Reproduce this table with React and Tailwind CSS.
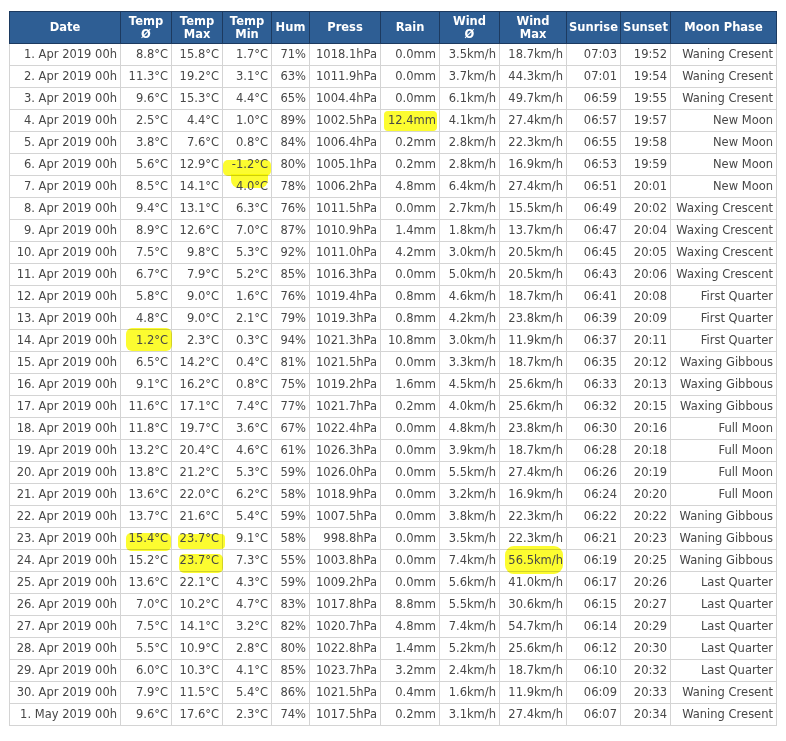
const rows = [
  ["1. Apr 2019 00h", "8.8", "15.8", "1.7", "71", "1018.1", "0.0", "3.5", "18.7", "07:03", "19:52", "Waning Cresent"],
  ["2. Apr 2019 00h", "11.3", "19.2", "3.1", "63", "1011.9", "0.0", "3.7", "44.3", "07:01", "19:54", "Waning Cresent"],
  ["3. Apr 2019 00h", "9.6", "15.3", "4.4", "65", "1004.4", "0.0", "6.1", "49.7", "06:59", "19:55", "Waning Cresent"],
  ["4. Apr 2019 00h", "2.5", "4.4", "1.0", "89", "1002.5", "12.4", "4.1", "27.4", "06:57", "19:57", "New Moon"],
  ["5. Apr 2019 00h", "3.8", "7.6", "0.8", "84", "1006.4", "0.2", "2.8", "22.3", "06:55", "19:58", "New Moon"],
  ["6. Apr 2019 00h", "5.6", "12.9", "-1.2", "80", "1005.1", "0.2", "2.8", "16.9", "06:53", "19:59", "New Moon"],
  ["7. Apr 2019 00h", "8.5", "14.1", "4.0", "78", "1006.2", "4.8", "6.4", "27.4", "06:51", "20:01", "New Moon"],
  ["8. Apr 2019 00h", "9.4", "13.1", "6.3", "76", "1011.5", "0.0", "2.7", "15.5", "06:49", "20:02", "Waxing Crescent"],
  ["9. Apr 2019 00h", "8.9", "12.6", "7.0", "87", "1010.9", "1.4", "1.8", "13.7", "06:47", "20:04", "Waxing Crescent"],
  ["10. Apr 2019 00h", "7.5", "9.8", "5.3", "92", "1011.0", "4.2", "3.0", "20.5", "06:45", "20:05", "Waxing Crescent"],
  ["11. Apr 2019 00h", "6.7", "7.9", "5.2", "85", "1016.3", "0.0", "5.0", "20.5", "06:43", "20:06", "Waxing Crescent"],
  ["12. Apr 2019 00h", "5.8", "9.0", "1.6", "76", "1019.4", "0.8", "4.6", "18.7", "06:41", "20:08", "First Quarter"],
  ["13. Apr 2019 00h", "4.8", "9.0", "2.1", "79", "1019.3", "0.8", "4.2", "23.8", "06:39", "20:09", "First Quarter"],
  ["14. Apr 2019 00h", "1.2", "2.3", "0.3", "94", "1021.3", "10.8", "3.0", "11.9", "06:37", "20:11", "First Quarter"],
  ["15. Apr 2019 00h", "6.5", "14.2", "0.4", "81", "1021.5", "0.0", "3.3", "18.7", "06:35", "20:12", "Waxing Gibbous"],
  ["16. Apr 2019 00h", "9.1", "16.2", "0.8", "75", "1019.2", "1.6", "4.5", "25.6", "06:33", "20:13", "Waxing Gibbous"],
  ["17. Apr 2019 00h", "11.6", "17.1", "7.4", "77", "1021.7", "0.2", "4.0", "25.6", "06:32", "20:15", "Waxing Gibbous"],
  ["18. Apr 2019 00h", "11.8", "19.7", "3.6", "67", "1022.4", "0.0", "4.8", "23.8", "06:30", "20:16", "Full Moon"],
  ["19. Apr 2019 00h", "13.2", "20.4", "4.6", "61", "1026.3", "0.0", "3.9", "18.7", "06:28", "20:18", "Full Moon"],
  ["20. Apr 2019 00h", "13.8", "21.2", "5.3", "59", "1026.0", "0.0", "5.5", "27.4", "06:26", "20:19", "Full Moon"],
  ["21. Apr 2019 00h", "13.6", "22.0", "6.2", "58", "1018.9", "0.0", "3.2", "16.9", "06:24", "20:20", "Full Moon"],
  ["22. Apr 2019 00h", "13.7", "21.6", "5.4", "59", "1007.5", "0.0", "3.8", "22.3", "06:22", "20:22", "Waning Gibbous"],
  ["23. Apr 2019 00h", "15.4", "23.7", "9.1", "58", "998.8", "0.0", "3.5", "22.3", "06:21", "20:23", "Waning Gibbous"],
  ["24. Apr 2019 00h", "15.2", "23.7", "7.3", "55", "1003.8", "0.0", "7.4", "56.5", "06:19", "20:25", "Waning Gibbous"],
  ["25. Apr 2019 00h", "13.6", "22.1", "4.3", "59", "1009.2", "0.0", "5.6", "41.0", "06:17", "20:26", "Last Quarter"],
  ["26. Apr 2019 00h", "7.0", "10.2", "4.7", "83", "1017.8", "8.8", "5.5", "30.6", "06:15", "20:27", "Last Quarter"],
  ["27. Apr 2019 00h", "7.5", "14.1", "3.2", "82", "1020.7", "4.8", "7.4", "54.7", "06:14", "20:29", "Last Quarter"],
  ["28. Apr 2019 00h", "5.5", "10.9", "2.8", "80", "1022.8", "1.4", "5.2", "25.6", "06:12", "20:30", "Last Quarter"],
  ["29. Apr 2019 00h", "6.0", "10.3", "4.1", "85", "1023.7", "3.2", "2.4", "18.7", "06:10", "20:32", "Last Quarter"],
  ["30. Apr 2019 00h", "7.9", "11.5", "5.4", "86", "1021.5", "0.4", "1.6", "11.9", "06:09", "20:33", "Waning Cresent"],
  ["1. May 2019 00h", "9.6", "17.6", "2.3", "74", "1017.5", "0.2", "3.1", "27.4", "06:07", "20:34", "Waning Cresent"],
];

const units = ["", "°C", "°C", "°C", "%", "hPa", "mm", "km/h", "km/h", "", "", ""];

const headers = [
  ["Date"],
  ["Temp", "Ø"],
  ["Temp", "Max"],
  ["Temp", "Min"],
  ["Hum"],
  ["Press"],
  ["Rain"],
  ["Wind", "Ø"],
  ["Wind", "Max"],
  ["Sunrise"],
  ["Sunset"],
  ["Moon Phase"],
];

const widths = ["w-[111px]", "w-[51px]", "w-[51px]", "w-[49px]", "w-[38px]", "w-[71px]", "w-[59px]", "w-[60px]", "w-[67px]", "w-[54px]", "w-[50px]", "w-[106px]"];

// highlighter strokes, positioned inside the cell
const marks = {
  "3-6": ["left-[3px] top-[1px] w-[53px] h-[20px] rounded-[4px]"],
  "5-3": [
    "left-[0px] top-[6px] w-[48px] h-[16px] rounded-[5px]",
    "left-[8px] top-[20px] w-[37px] h-[14px] rounded-b-[8px]",
  ],
  "13-1": ["left-[5px] top-[-2px] w-[46px] h-[23px] rounded-[6px]"],
  "22-1": ["left-[5px] top-[5px] w-[45px] h-[18px] rounded-[5px]"],
  "22-2": ["left-[6px] top-[6px] w-[47px] h-[15px] rounded-[4px]"],
  "23-2": ["left-[7px] top-[4px] w-[44px] h-[19px] rounded-[5px]"],
  "23-8": ["left-[5px] top-[-4px] w-[58px] h-[28px] rounded-[9px]"],
};

export default function App() {
  return (
    <div className="min-h-[741px] bg-white pt-[11px] pl-[9px]" style={{ fontFamily: '"DejaVu Sans", Verdana, sans-serif' }}>
      <table className="table-fixed border-collapse w-[767px] text-[11.5px] text-[#474747]">
        <colgroup>
          {widths.map((w, i) => (
            <col key={i} className={w} />
          ))}
        </colgroup>
        <thead>
          <tr className="h-[32px]">
            {headers.map((h, i) => (
              <th
                key={i}
                className="bg-[#2e5e94] border border-[#1c3a60] text-white font-bold text-center leading-[13px] px-0 whitespace-nowrap"
              >
                {h.map((line, j) => (
                  <div key={j}>{line}</div>
                ))}
              </th>
            ))}
          </tr>
        </thead>
        <tbody>
          {rows.map((row, r) => (
            <tr key={r} className="h-[22px]">
              {row.map((cell, c) => (
                <td
                  key={c}
                  className="relative border border-[#d4d4d4] px-[3px] text-right whitespace-nowrap leading-[21px]"
                >
                  {(marks[`${r}-${c}`] || []).map((m, k) => (
                    <span key={k} className={`absolute bg-[#fcfc30] mix-blend-multiply ${m}`} />
                  ))}
                  <span className="relative">{cell + units[c]}</span>
                </td>
              ))}
            </tr>
          ))}
        </tbody>
      </table>
    </div>
  );
}
